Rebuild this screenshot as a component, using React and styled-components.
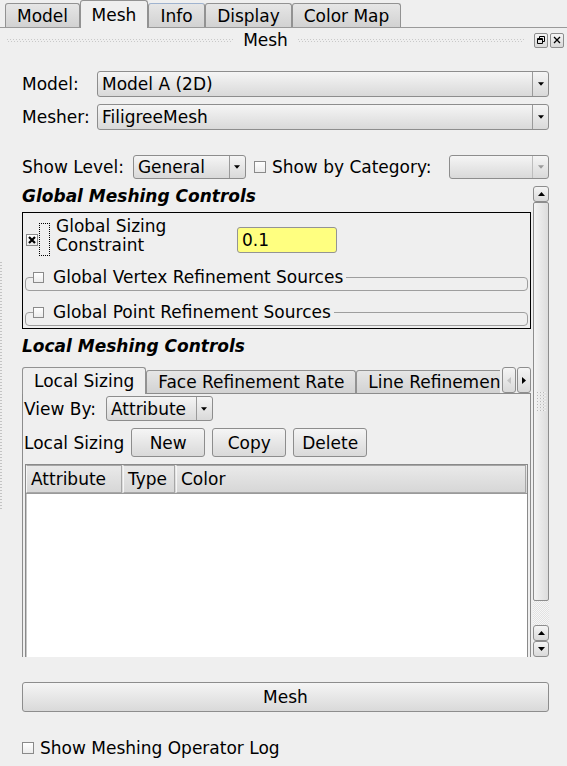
import React from 'react';
import styled, { createGlobalStyle, css } from 'styled-components';

const GlobalStyle = createGlobalStyle`
  html, body {
    margin: 0;
    padding: 0;
    background: #efefef;
  }
  body {
    font-family: "DejaVu Sans", "Liberation Sans", sans-serif;
    font-size: 17px;
    line-height: 20px;
    color: #000;
  }
`;

const Page = styled.div`
  width: 567px;
  height: 766px;
  overflow: hidden;
  background:
    repeating-linear-gradient(180deg, #c4c4c4 0 1px, transparent 1px 3px) no-repeat 0 262px / 2px 248px,
    #efefef;
`;

const bevel = css`
  background: linear-gradient(#f5f5f5, #d9d9d9);
  border: 1px solid #8d8d8d;
  border-radius: 3px;
`;

/* top tab bar */
const TopTabs = styled.div`
  display: flex;
  align-items: flex-end;
  height: 28px;
  padding-left: 5px;
  border-bottom: 1px solid #9a9a9a;
  box-sizing: border-box;
`;

const TopTab = styled.div`
  width: ${(p) => p.$w}px;
  height: ${(p) => (p.$active ? 28 : 24)}px;
  box-sizing: border-box;
  display: flex;
  align-items: center;
  justify-content: center;
  border: 1px solid #929292;
  border-bottom: none;
  border-radius: 3px 3px 0 0;
  margin-bottom: ${(p) => (p.$active ? -1 : 0)}px;
  background: ${(p) => (p.$active ? '#efefef' : 'linear-gradient(#e6e6e6, #d2d2d2)')};
  border-top-color: ${(p) => (p.$hover ? '#9fb3cf' : '#929292')};
  padding-top: ${(p) => (p.$active ? 0 : 1)}px;
`;

/* dock title */
const DockTitle = styled.div`
  display: flex;
  align-items: center;
  height: 24px;
  padding: 0 3px 0 7px;
  gap: 10px;
`;

const Grip = styled.div`
  flex: 1;
  height: 3px;
  background:
    repeating-linear-gradient(90deg, #c9c9c9 0 1px, transparent 1px 3px) 0 0 / 100% 1px no-repeat,
    repeating-linear-gradient(90deg, transparent 0 1px, #c9c9c9 1px 2px, transparent 2px 3px) 0 2px / 100% 1px no-repeat;
`;

const DockButtons = styled.div`
  display: flex;
  gap: 2px;
`;

const DockButton = styled.div`
  width: 12px;
  height: 13px;
  ${bevel};
  border-radius: 2px;
  display: flex;
  align-items: center;
  justify-content: center;
`;

/* body */
const Body = styled.div`
  padding: 19px 18px 0 22px;
`;

const FormGrid = styled.div`
  display: grid;
  grid-template-columns: 75px 1fr;
  row-gap: 7px;
  align-items: center;
`;

const Label = styled.span`
  white-space: nowrap;
  line-height: 20px;
`;

const Spacer = styled.div`
  flex: ${(p) => (p.$w ? `0 0 ${p.$w}px` : 1)};
`;

const ComboBox = styled.div`
  display: flex;
  height: ${(p) => p.$h || 26}px;
  width: ${(p) => (p.$w ? `${p.$w}px` : 'auto')};
  box-sizing: border-box;
  ${bevel};
  color: ${(p) => (p.$disabled ? '#999' : '#000')};
`;

const ComboText = styled.div`
  flex: 1;
  display: flex;
  align-items: center;
  padding-left: 4px;
  white-space: nowrap;
  overflow: hidden;
`;

const ComboArrow = styled.div`
  width: 15px;
  border-left: 1px solid ${(p) => (p.$disabled ? '#bdbdbd' : '#9a9a9a')};
  display: flex;
  align-items: center;
  justify-content: center;
`;

const LevelRow = styled.div`
  display: flex;
  align-items: center;
  margin-top: 25px;
  height: 24px;
`;

const CheckBox = styled.span`
  display: inline-flex;
  align-items: center;
  justify-content: center;
  width: 12px;
  height: 12px;
  box-sizing: border-box;
  border: 1px solid #8a8a8a;
  background: linear-gradient(#fff, #ececec);
  flex-shrink: 0;
`;

const ScrollArea = styled.div`
  display: flex;
  gap: 2px;
  margin-top: 7px;
  height: 471px;
`;

const ScrollContent = styled.div`
  flex: 1;
  min-width: 0;
  overflow: hidden;
`;

const SectionTitle = styled.div`
  font-weight: bold;
  font-style: italic;
  height: ${(p) => p.$h || 26}px;
  line-height: 20px;
  padding-top: ${(p) => p.$top || 0}px;
  box-sizing: border-box;
  white-space: nowrap;
`;

const GroupFrame = styled.div`
  border: 1px solid #000;
  height: 117px;
  box-sizing: border-box;
  padding: 10px 0 3px 0;
`;

const SizingRow = styled.div`
  display: flex;
  align-items: center;
  height: 33px;
  padding-left: 3px;
`;

const FocusRect = styled.div`
  width: 11px;
  height: 33px;
  box-sizing: border-box;
  border: 1px dotted #000;
  margin-left: 1px;
  margin-right: 6px;
`;

const SizingLabel = styled.div`
  width: 181px;
  line-height: 19px;
  padding-bottom: 7px;
`;

const YellowInput = styled.div`
  width: 100px;
  height: 26px;
  box-sizing: border-box;
  background: #ffff80;
  border: 1px solid #949494;
  border-radius: 3px;
  display: flex;
  align-items: center;
  padding-left: 4px;
`;

const SubGroup = styled.fieldset`
  margin: 12px 2px 0 2px;
  padding: 0 0 3px 0;
  border: 1px solid #9e9e9e;
  border-radius: 4px;
  min-width: 0;
`;

const SubLegend = styled.legend`
  display: flex;
  align-items: center;
  gap: 9px;
  margin-left: 7px;
  padding: 0 3px 0 0;
  line-height: 19px;
  white-space: nowrap;
`;

const LegendBox = styled(CheckBox)`
  width: 11px;
  height: 11px;
`;

/* inner tab widget */
const TabWidget = styled.div`
  margin-top: 6px;
`;

const TabsRow = styled.div`
  display: flex;
  align-items: flex-end;
  height: 27px;
`;

const TabList = styled.div`
  flex: 1;
  display: flex;
  align-items: flex-end;
  overflow: hidden;
  height: 27px;
  min-width: 0;
`;

const InnerTab = styled.div`
  flex-shrink: 0;
  height: ${(p) => (p.$active ? 27 : 24)}px;
  box-sizing: border-box;
  padding: 0 11px;
  display: flex;
  align-items: center;
  border: 1px solid #929292;
  border-radius: 3px 3px 0 0;
  border-bottom: ${(p) => (p.$active ? 'none' : '1px solid #8c8c8c')};
  background: ${(p) => (p.$active ? '#efefef' : 'linear-gradient(#e6e6e6, #d2d2d2)')};
  white-space: nowrap;
`;

const TabScroll = styled.div`
  display: flex;
  gap: 1px;
  height: 27px;
  align-items: flex-start;
  padding-left: 2px;
  box-sizing: border-box;
  border-bottom: 1px solid #8c8c8c;
`;

const TabScrollBtn = styled.div`
  width: 14px;
  height: 26px;
  box-sizing: border-box;
  ${bevel};
  display: flex;
  align-items: center;
  justify-content: center;
`;

const TabPane = styled.div`
  border: 1px solid #8c8c8c;
  border-top: none;
  height: 300px;
  padding: 2px 1px 0 1px;
`;

const PaneRow = styled.div`
  display: flex;
  align-items: center;
  gap: ${(p) => p.$gap || 8}px;
  margin-top: ${(p) => p.$mt || 0}px;
`;

const PushButton = styled.div`
  height: ${(p) => p.$h || 29}px;
  width: ${(p) => (p.$w ? `${p.$w}px` : 'auto')};
  box-sizing: border-box;
  ${bevel};
  display: flex;
  align-items: center;
  justify-content: center;
`;

const Table = styled.div`
  margin: 7px 1px 0 1px;
  border: 1px solid #8a8a8a;
  box-shadow: inset 1px 1px 0 #c8c8c8;
  background: #fff;
  height: 240px;
`;

const TableHead = styled.div`
  display: grid;
  grid-template-columns: 97px 53px 1fr;
  height: 28px;
  background: linear-gradient(#eaeaea, #d6d6d6);
  border-bottom: 1px solid #9a9a9a;
`;

const HeadCell = styled.div`
  display: flex;
  align-items: center;
  padding-left: 4px;
  border: 1px solid #a6a6a6;
  border-left-color: #f6f6f6;
  margin-right: 1px;
`;

/* vertical scrollbar */
const VScroll = styled.div`
  width: 16px;
  display: flex;
  flex-direction: column;
`;

const ScrollBtn = styled.div`
  height: 16px;
  flex-shrink: 0;
  box-sizing: border-box;
  ${bevel};
  display: flex;
  align-items: center;
  justify-content: center;
`;

const Thumb = styled.div`
  flex: 1;
  box-sizing: border-box;
  border: 1px solid #8d8d8d;
  border-radius: 2px;
  background: linear-gradient(90deg, #f4f4f4, #dcdcdc);
  display: flex;
  flex-direction: column;
  justify-content: center;
  align-items: center;
`;

const ThumbGrip = styled.div`
  width: 9px;
  height: 20px;
  background: repeating-linear-gradient(90deg, #b8b8b8 0 1px, transparent 1px 3px), #f0f0f0;
  -webkit-mask: repeating-linear-gradient(180deg, #000 0 1px, transparent 1px 3px);
  mask: repeating-linear-gradient(180deg, #000 0 1px, transparent 1px 3px);
`;

const Groove = styled.div`
  height: 24px;
  flex-shrink: 0;
  background: repeating-conic-gradient(#e2e2e2 0 25%, #f6f6f6 0 50%) 0 0 / 2px 2px;
`;

const MeshButton = styled(PushButton)`
  margin-top: 25px;
`;

const LogRow = styled.div`
  display: flex;
  align-items: center;
  gap: 6px;
  margin-top: 26px;
  height: 20px;
`;

const Arrow = ({ dir = 'down', color = '#000', size = 7 }) => {
  const pts = {
    down: '0,0 7,0 3.5,4',
    up: '0,4 7,4 3.5,0',
    right: '0,0 4,3.5 0,7',
    left: '4,0 0,3.5 4,7',
  }[dir];
  const vertical = dir === 'up' || dir === 'down';
  return (
    <svg width={vertical ? size : 4} height={vertical ? 4 : size} viewBox={vertical ? '0 0 7 4' : '0 0 4 7'}>
      <polygon points={pts} fill={color} />
    </svg>
  );
};

const Combo = ({ children, h, w, disabled }) => (
  <ComboBox $h={h} $w={w} $disabled={disabled}>
    <ComboText>{children}</ComboText>
    <ComboArrow $disabled={disabled}>
      <Arrow color={disabled ? '#9a9a9a' : '#000'} size={6} />
    </ComboArrow>
  </ComboBox>
);

const CheckedMark = () => (
  <svg width="8" height="8" viewBox="0 0 8 8">
    <path d="M1 1 L7 7 M7 1 L1 7" stroke="#000" strokeWidth="2.2" />
  </svg>
);

const SubGroupBox = ({ title }) => (
  <SubGroup>
    <SubLegend>
      <LegendBox />
      {title}
    </SubLegend>
  </SubGroup>
);

export default function App() {
  return (
    <Page>
      <GlobalStyle />
      <TopTabs>
        <TopTab $w={75}>Model</TopTab>
        <TopTab $w={68} $active>Mesh</TopTab>
        <TopTab $w={57} $hover>Info</TopTab>
        <TopTab $w={87}>Display</TopTab>
        <TopTab $w={109}>Color Map</TopTab>
      </TopTabs>

      <DockTitle>
        <Grip />
        <span>Mesh</span>
        <Grip />
        <DockButtons>
          <DockButton>
            <svg width="8" height="8" viewBox="0 0 8 8">
              <path d="M2.5 0.5 H7.5 V5.5 H5.5 M0.5 2.5 H5.5 V7.5 H0.5 Z M2.5 0.5 V2.5 M0.5 3.5 H5.5" stroke="#000" fill="none" />
            </svg>
          </DockButton>
          <DockButton>
            <svg width="8" height="8" viewBox="0 0 8 8">
              <path d="M1 1 L7 7 M7 1 L1 7" stroke="#000" strokeWidth="1.3" />
            </svg>
          </DockButton>
        </DockButtons>
      </DockTitle>

      <Body>
        <FormGrid>
          <Label>Model:</Label>
          <Combo>Model A (2D)</Combo>
          <Label>Mesher:</Label>
          <Combo>FiligreeMesh</Combo>
        </FormGrid>

        <LevelRow>
          <Label>Show Level:</Label>
          <Spacer $w={9} />
          <Combo h={24} w={113}>General</Combo>
          <Spacer $w={8} />
          <CheckBox />
          <Spacer $w={6} />
          <Label>Show by Category:</Label>
          <Spacer />
          <Combo h={24} w={100} disabled />
        </LevelRow>

        <ScrollArea>
          <ScrollContent>
            <SectionTitle>Global Meshing Controls</SectionTitle>
            <GroupFrame>
              <SizingRow>
                <CheckBox>
                  <CheckedMark />
                </CheckBox>
                <FocusRect />
                <SizingLabel>
                  Global Sizing
                  <br />
                  Constraint
                </SizingLabel>
                <YellowInput>0.1</YellowInput>
              </SizingRow>
              <SubGroupBox title="Global Vertex Refinement Sources" />
              <SubGroupBox title="Global Point Refinement Sources" />
            </GroupFrame>

            <SectionTitle $h={32} $top={7}>Local Meshing Controls</SectionTitle>

            <TabWidget>
              <TabsRow>
                <TabList>
                  <InnerTab $active>Local Sizing</InnerTab>
                  <InnerTab>Face Refinement Rate</InnerTab>
                  <InnerTab>Line Refinement Rate</InnerTab>
                </TabList>
                <TabScroll>
                  <TabScrollBtn>
                    <Arrow dir="left" color="#c4c4c4" />
                  </TabScrollBtn>
                  <TabScrollBtn>
                    <Arrow dir="right" />
                  </TabScrollBtn>
                </TabScroll>
              </TabsRow>
              <TabPane>
                <PaneRow $gap={10}>
                  <Label>View By:</Label>
                  <Combo h={25} w={107}>Attribute</Combo>
                </PaneRow>
                <PaneRow $mt={7} $gap={7}>
                  <Label>Local Sizing</Label>
                  <PushButton $w={74}>New</PushButton>
                  <PushButton $w={74}>Copy</PushButton>
                  <PushButton $w={74}>Delete</PushButton>
                </PaneRow>
                <Table>
                  <TableHead>
                    <HeadCell>Attribute</HeadCell>
                    <HeadCell>Type</HeadCell>
                    <HeadCell>Color</HeadCell>
                  </TableHead>
                </Table>
              </TabPane>
            </TabWidget>
          </ScrollContent>

          <VScroll>
            <ScrollBtn>
              <Arrow dir="up" />
            </ScrollBtn>
            <Thumb>
              <ThumbGrip />
            </Thumb>
            <Groove />
            <ScrollBtn>
              <Arrow dir="up" />
            </ScrollBtn>
            <ScrollBtn>
              <Arrow dir="down" />
            </ScrollBtn>
          </VScroll>
        </ScrollArea>

        <MeshButton $h={30}>Mesh</MeshButton>

        <LogRow>
          <CheckBox />
          <Label>Show Meshing Operator Log</Label>
        </LogRow>
      </Body>
    </Page>
  );
}
